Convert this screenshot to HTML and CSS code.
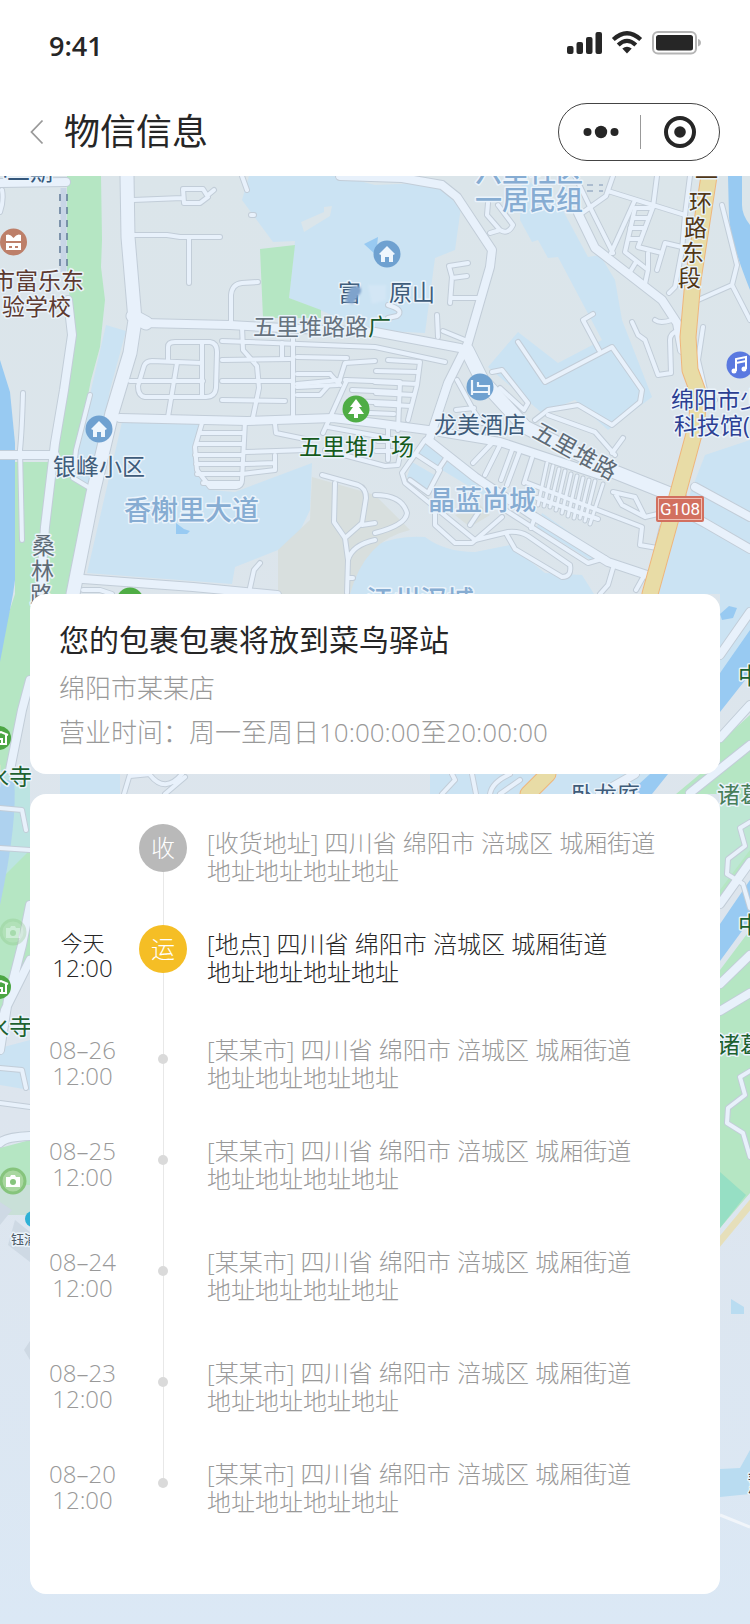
FILE: index.html
```html
<!DOCTYPE html>
<html lang="zh-CN">
<head>
	<meta charset="utf-8">
	<meta name="viewport" content="width=device-width">
	<title>物信信息</title>
	<link rel="stylesheet" href="styles.css">
</head>
<body>
	<header class="top">
		<div class="status">
			<span class="clock">9:41</span>
			<div class="signals">
				<svg width="35" height="24" viewBox="0 0 35 24">
					<g fill="#262626">
						<rect x="0" y="15" width="6.500" height="8" rx="2"/>
						<rect x="9.500" y="11" width="6.500" height="12" rx="2"/>
						<rect x="19" y="6" width="6.500" height="17" rx="2"/>
						<rect x="28.500" y="1" width="6.500" height="22" rx="2"/>
					</g>
				</svg>
				<svg width="32" height="24" viewBox="0 0 32 24">
					<g fill="none" stroke="#262626" stroke-width="4.200">
						<path d="M2.300 8.500Q16 -4 29.700 8.500"/>
						<path d="M7.200 14Q16 5.800 24.800 14"/>
					</g>
					<path d="M11.300 17.500Q16 13.800 20.700 17.500L16 22.500Z" fill="#262626"/>
				</svg>
				<svg width="50" height="24" viewBox="0 0 50 24">
					<rect x="1" y="1" width="43" height="21.500" rx="5" fill="none" stroke="#b5b5b5" stroke-width="2"/>
					<rect x="4" y="4" width="37" height="15.500" rx="2.500" fill="#262626"/>
					<path d="M46 8Q49 9 49 11.800Q49 14.500 46 15.500Z" fill="#b5b5b5"/>
				</svg>
			</div>
		</div>
		<div class="nav">
			<button class="back" type="button" aria-label="返回">
				<svg width="14" height="26" viewBox="0 0 14 26"><path d="M12.500 1.500L1.500 13L12.500 24.500" fill="none" stroke="#999" stroke-width="1.800"/></svg>
			</button>
			<h1 class="title">物信信息</h1>
			<div class="capsule">
				<button type="button" aria-label="更多">
					<svg width="36" height="14" viewBox="0 0 36 14"><g fill="#262626"><circle cx="4.500" cy="7" r="4"/><circle cx="18" cy="7" r="6.200"/><circle cx="31.500" cy="7" r="4"/></g></svg>
				</button>
				<button type="button" aria-label="关闭">
					<svg width="32" height="32" viewBox="0 0 32 32"><circle cx="16" cy="16" r="14" fill="none" stroke="#262626" stroke-width="4"/><circle cx="16" cy="16" r="5.800" fill="#262626"/></svg>
				</button>
			</div>
		</div>
	</header>

	<main class="stage">
		<svg class="map" viewBox="0 176 750 1448" preserveAspectRatio="xMidYMin slice" aria-hidden="true">
			<defs>
				<linearGradient id="ground" x1="0" y1="0" x2="0" y2="1">
					<stop offset="0" stop-color="#dbe5ea"/>
					<stop offset="0.650" stop-color="#dde5ee"/>
					<stop offset="1" stop-color="#dbe8f5"/>
				</linearGradient>
				<filter id="soft"><feGaussianBlur stdDeviation="1.200"/></filter>
				<!-- small streets -->
				<g id="minor">
					<path d="M23 393Q22 430 20 450L22 540"/>
					<path d="M133 200L182 198M183 189L203 189L208 197L200 203L184 203ZM208 195L214 190"/>
					<path d="M133 235L167 235L180 237L220 237M189 237V283M231 323V295Q232 284 242 283L258 282"/>
					<path d="M242 176L247 190M251 215L254 215M0 212Q4 200 2 190"/>
					<path d="M222 341L375 347L445 362M222 360L290 359M222 381L293 381M242 327L243 350L257 366L259 388L253 417"/>
					<path d="M293 337V420M282 343V357M297 357L347 358M297 374L330 374M297 387L338 385L345 363L375 361"/>
					<path d="M168 360V347Q168 342 175 342L210 342Q217 343 217 352L216 388Q215 397 206 397L145 397Q138 396 138 386L144 366Q146 361 152 361L202 363M202 343V396M130 381L203 381M177 363L168 417"/>
					<path d="M222 400L285 401M297 395L320 395L328 386M297 384L340 380M347 380L323 433M330 374L340 385M345 380L400 382L398 430M352 390L397 392M350 401L396 403M347 412L394 414"/>
					<path d="M202 423L195 447L197 470L210 487L236 487Q242 486 242 480L245 421M201 433H243M197 444H243M195 455H243M196 464H243M197 474H242M203 483H241"/>
					<path d="M245 452L306 450M245 464L275 463M275 455V470L242 474M275 424L276 433L310 440M328 427L400 440M325 450L385 466L398 465L403 440M388 425V460M378 441H398M376 451H397"/>
					<path d="M260 563L254 570L250 588M90 395L76 450L73 478L88 487M83 590H100L112 594"/>
					<path d="M322 475L358 485Q366 488 366 498L362 523L345 538L334 522L335 483M375 523L362 525M345 538L348 560L347 593M375 540Q352 545 348 560M348 578H353"/>
					<path d="M375 495Q402 495 407 513Q406 525 375 533"/>
					<path d="M388 360L420 362L417 385L408 420M376 371L418 372M375 382L417 384M376 393L414 395M376 404L411 406"/>
					<path d="M468 263L449 266L452 277L450 303M467 276L452 278M452 298L478 298M437 315L438 337M443 331L465 340M388 305Q405 310 397 316L388 318"/>
					<path d="M488 203L487 215L500 230Q508 235 513 225L498 205M490 233L500 230"/>
					<path d="M575 176L588 203L613 253M582 213L606 196L613 176M608 191L685 215M635 200L611 253M657 176L653 207L638 247L662 253L665 243L682 247"/>
					<path d="M635 208L625 252L648 270L645 284M635 208H650M633 218H648M630 228H645M628 239H641M648 253V270M662 253L657 270M682 250L675 287L669 293M636 262L630 272M690 176L685 215L682 250"/>
					<path d="M632 322L638 335L645 340L658 375L671 373L670 340Q670 333 678 331M655 320Q660 324 672 320"/>
					<path d="M722 205L737 265L732 285L698 300M732 285L750 320M703 327L698 360L705 390L715 400"/>
					<path d="M518 342L545 382L612 347L642 390L640 402L612 425L578 405L548 410L535 420M492 372L502 370L528 403L524 410L500 388M593 314L583 320L599 350"/>
					<path d="M457 380L475 413L482 423M456 410L474 408M548 415L595 432L615 455M623 438L612 453"/>
					<path d="M492 443L473 463M500 445L485 475M512 450L501 480M519 453L507 485M532 458L524 483M425 440L402 473L405 483L475 540L508 532Q520 531 528 536L570 565Q572 577 562 577L515 549L507 535"/>
					<path d="M435 513V525L455 543L472 543L502 517M417 455L440 470L428 493L410 480M448 455L438 470M502 508L588 563L605 558M470 525L478 513"/>
					<path d="M525 482L642 527L640 545L657 548L662 527M537 498L598 519M613 492L635 497L645 517L662 513M645 517L622 505L616 495M535 517L531 528M613 568L608 585L600 594M645 574L636 590"/>
					<path d="M130 774L124 794M130 776L150 774M150 775Q165 794 182 774M165 794L185 777M452 774L455 780L442 794M472 774L476 794M490 794Q492 782 510 774M500 794L520 780"/>
					<path d="M0 808L22 810L26 830M0 848L30 850M0 1068L22 1070L26 1088M0 1103L30 1107"/>
					<path d="M750 822L740 828L745 846L728 859L727 874L743 884L750 908M750 1071L740 1077L745 1095L728 1108L727 1123L743 1133L750 1157"/>
				</g>
				<!-- parking lanes -->
				<path id="lanes" d="M547 463L538 505M553 466L544 506M559 469L550 507M565 471L556 510M571 474L562 513M577 476L568 516M583 478L574 518M589 480L580 518M595 481L585 521M603 484L590 524"/>
				<!-- wider streets -->
				<g id="middle">
					<path d="M0 183L66 182M68 300L72 335L64 390L55 443L45 527L40 594"/>
					<path d="M0 455L55 455M143 323L230 325L300 329L375 332L460 348"/>
					<path d="M120 418L247 421L333 418L375 423L428 430L500 442L600 475"/>
					<path d="M83 579L193 587L277 595"/>
					<path d="M340 176L402 178L442 185L457 197L492 250L490 267L468 343L448 383L430 437"/>
					<path d="M428 440L475 477L535 517L608 562L650 576"/>
					<path d="M578 213L595 248L662 300L677 323L682 350M695 487L750 517M680 510L705 523L750 549"/>
					<path d="M30 680L22 710L10 770M30 905L22 945L8 1000L0 1050M30 960L5 1010L0 1030M0 1143Q5 1137 30 1136"/>
					<path d="M720 655L750 612M720 738L750 705M690 793L750 745M720 904L750 862M720 984L750 955M720 1011L750 993M635 774L600 794"/>
				</g>
				<g id="major">
					<path d="M127 176L128 237L135 320L130 353L112 413L93 493L73 594M133 316L146 323"/>
					<path d="M467 350L482 380L525 427L615 472L680 498"/>
				</g>
				<path id="highway" d="M709 176L693 280L688 337L690 370L698 392L697 423L678 493L650 594M548 774L528 794"/>
				<g id="house"><circle r="13.500"/><path d="M-8 0L0 -8L8 0L6 1V8H2V3H-2V8H-6V1Z" fill="#eef6fd"/></g>
				<g id="camera"><circle r="12" fill="#a9d7a0" stroke="#86c47c" stroke-width="3"/><path d="M-7 -4H-3L-2 -6H2L3 -4H7V6H-7Z" fill="#fff"/><circle cy="1" r="3" fill="#86c47c"/></g>
				<g id="temple"><circle r="12" fill="#4ca644"/><path d="M-6 -3L2 -6L9 -3M-4 -3V6H7V-3M0 6V1H3V6" fill="none" stroke="#fff" stroke-width="2"/></g>
			</defs>

			<rect y="176" width="750" height="1448" fill="url(#ground)"/>

			<!-- water and districts -->
			<g fill="#cbe3f3">
				<path d="M249 176L242 200L273 242L295 241L289 298L320 310L365 330L425 333L435 258L455 250L461 207L450 190L422 183L375 185L340 176Z"/>
				<path d="M106 325L126 331L110 390L92 485L72 480L80 440L91 390Z"/>
				<path d="M122 422L200 423L193 447L197 475L210 490L235 492L312 463L310 510L297 537L278 550L235 567L232 584L87 573Z"/>
				<path d="M522 176L560 205L588 257L600 255L615 280L622 320L652 397L608 430L575 400L542 413L488 367L518 332L558 363L602 340L558 257L548 258L538 240L532 242L520 220Z"/>
				<path d="M340 594Q350 560 375 545Q400 535 425 537Q445 552 475 552L510 545L545 573L582 575L594 594Z"/>
				<path d="M705 455L750 440V594H655L676 530Z"/>
				<path d="M425 443L445 457L438 467L418 455ZM412 462L438 477L428 493L407 477ZM450 458L485 480L520 505L500 505L442 470ZM542 513L605 557L595 563L537 527Z"/>
				<path d="M720 594H750V655L720 672ZM60 774H120V794H60ZM430 774H650V794H430ZM0 1048L30 1040V1090L0 1085Z"/>
			</g>
			<path d="M301 222L324 212V207L332 206L330 216L304 232Z" fill="#dbe5ea"/>
			<path d="M312 477L375 495L410 530Q365 540 350 594H278V550L310 520Z" fill="#d8dfde"/>
			<path d="M455 515L480 505L490 515L470 527Z" fill="#d8dfde"/>
			<g fill="#b5e6c3">
				<path d="M67 176H101L102 240L101 267L105 300L100 347L91 380L77 450L72 475L88 490L68 600L30 620V690L5 770H0V640L15 594V462H50L70 380L75 345L72 310L67 280Z"/>
				<path d="M260 249L295 245L289 298L321 310V318H263Z"/>
				<path d="M720 742L750 715V865L720 900V794H676L700 774H720ZM720 970L750 930V1193L720 1228Z"/>
				<path d="M0 870L30 850V960L0 1020ZM0 1148L30 1140V1185L0 1192Z"/>
			</g>
			<path d="M720 1172L746 1195L720 1228Z" fill="#96dfc4"/>
			<path d="M0 770H30V850L0 880Z" fill="#bce4e2"/>
			<path d="M720 800H750V850L720 890Z" fill="#bde7d3"/>
			<path d="M0 1185H30V1215H0Z" fill="#c9e0d8"/>
			<g fill="#98caf2">
				<path d="M0 360L10 392L15 443V580L13 594L0 662Z"/>
				<path d="M728 176H742V205Q742 215 750 225V290Q730 240 729 217Z"/>
				<path d="M720 673L750 630V674L720 712ZM720 924L750 880V920L720 961ZM628 794L650 774H668L652 794Z"/>
				<path d="M364 244L378 237L376 255ZM176 523L184 529L190 531L187 534H176ZM720 614L729 606L737 608L733 618L722 620Z"/>
			</g>
			<path d="M0 780H14Q18 820 0 905Z" fill="#aed2ef"/>
			<path d="M731 1299L744 1307V1314H731ZM720 1469L740 1468L750 1450V1494L720 1497Z" fill="#b9dcf1"/>
			<path d="M0 1202L12 1210L0 1225ZM15 1220L30 1232V1262L8 1245ZM24 1350L30 1341V1360Z" fill="#ced9e4"/>
			<path d="M720 1515L750 1527" stroke="#f1f5fa" stroke-width="3"/>
			<path d="M63.500 188V272" stroke="#c8d5e6" stroke-width="6"/>
			<path d="M60 194V272M67 194V272" stroke="#5f7896" stroke-width="1.500" stroke-dasharray="7 6"/>
			<path d="M587 185H603M587 191H603" stroke="#7c94b4" stroke-dasharray="6 6"/>

			<!-- roads: casing first, surface on top -->
			<use href="#minor" class="road casing minor"/>
			<use href="#middle" class="road casing middle"/>
			<use href="#major" class="road casing major"/>
			<use href="#lanes" class="road casing lanes"/>
			<use href="#minor" class="road surface minor"/>
			<use href="#middle" class="road surface middle"/>
			<use href="#major" class="road surface major"/>
			<use href="#lanes" class="road surface lanes"/>
			<use href="#highway" class="road highway-casing"/>
			<use href="#highway" class="road highway"/>
			<path d="M712 1251L760 1193" class="road" stroke="#e6dfba" stroke-width="7"/>

			<!-- places -->
			<g class="labels">
				<text x="-16" y="180" fill="#34577b">小二期</text>
				<g fill="#5d3a30">
					<text x="-8" y="289">市富乐东</text>
					<text x="2" y="315">验学校</text>
				</g>
				<text x="253" y="335" fill="#66727e">五里堆路路<tspan fill="#1a5a2e">广</tspan></text>
				<g fill="#3f5c7a">
					<text x="338" y="301">富</text>
					<text x="389" y="301">原山</text>
					<text x="53" y="475">银峰小区</text>
					<text x="434" y="433">龙美酒店</text>
					<text x="571" y="803">卧龙庭</text>
				</g>
				<text x="299" y="455" fill="#155a1c">五里堆广场</text>
				<text transform="translate(531 436) rotate(29)" fill="#5f6b76">五里堆路</text>
				<g fill="#2c3f93">
					<text x="671" y="408">绵阳市少</text>
					<text x="674" y="434">科技馆(</text>
				</g>
				<g fill="#513716">
					<text x="695" y="186">一</text>
					<text x="689" y="211">环</text>
					<text x="684" y="236">路</text>
					<text x="681" y="261">东</text>
					<text x="678" y="286">段</text>
				</g>
				<g fill="#5f6b76">
					<text x="32" y="554">桑</text>
					<text x="31" y="579">林</text>
					<text x="30" y="603">路</text>
				</g>
				<g fill="#1c6130">
					<text x="-14" y="785">水寺</text>
					<text x="-14" y="1035">水寺</text>
					<text x="738" y="684">中</text>
					<text x="738" y="933">中</text>
					<text x="717" y="803" fill="#477e5a">诸葛</text>
					<text x="717" y="1053">诸葛</text>
				</g>
				<text x="747" y="1492" fill="#34404c">慧</text>
				<text class="tiny" x="11" y="1244" fill="#4d5a66">钰浦</text>
			</g>
			<g class="areas">
				<text x="475" y="182">六里社区</text>
				<text x="475" y="210">一居民组</text>
				<text x="124" y="520">香榭里大道</text>
				<text x="428" y="510">晶蓝尚城</text>
				<text x="366" y="610">江州汉城</text>
			</g>
			<path d="M350 288Q362 282 361 292L353 304L345 302Z" fill="#7fa3cc" filter="url(#soft)"/>
			<path d="M368 285H386V300L372 304Z" fill="#d3e6f5" filter="url(#soft)"/>

			<rect x="656" y="496" width="48" height="26" rx="2" fill="#d2705f"/>
			<rect x="658.500" y="498.500" width="43" height="21" fill="none" stroke="#f0c0b5"/>
			<text class="route" x="680" y="515">G108</text>

			<use href="#house" x="99" y="429" fill="#6fa1d0"/>
			<use href="#house" x="387" y="254" fill="#6fa1d0"/>
			<circle cx="480" cy="387" r="13.500" fill="#6fa1d0"/>
			<path d="M472 380V395M472 392H489V386H478V382M489 386V395" fill="none" stroke="#eef6fd" stroke-width="2.200"/>
			<circle cx="356" cy="409" r="13.500" fill="#4fad45"/>
			<path d="M356 399L362 407H359L364 414H358V418H354V414H348L353 407H350Z" fill="#fff"/>
			<circle cx="740" cy="365" r="13.500" fill="#5a79e0"/>
			<path d="M736 371V359L746 357V369M736 363L746 361" fill="none" stroke="#fff" stroke-width="2"/>
			<circle cx="734" cy="371" r="2.500" fill="#fff"/><circle cx="744" cy="369" r="2.500" fill="#fff"/>
			<circle cx="13.500" cy="242" r="13.500" fill="#bd7f69"/>
			<path d="M6 235Q10 233 13.500 238Q17 233 21 235V241H6ZM6 243H21V250H6Z" fill="#fff"/>
			<path d="M9 247H12M15 247H18" stroke="#bd7f69" stroke-width="2"/>
			<circle cx="130" cy="601" r="13.500" fill="#4fad45"/>
			<use href="#temple" x="-1" y="738"/>
			<use href="#temple" x="-1" y="987"/>
			<use href="#camera" x="13" y="932" opacity="0.300"/>
			<use href="#camera" x="13" y="1181"/>
			<circle cx="33" cy="1219" r="8" fill="#2fb1d6"/>
		</svg>

		<section class="card station">
			<h2 class="station-title">您的包裹包裹将放到菜鸟驿站</h2>
			<p class="station-line">绵阳市某某店</p>
			<p class="station-line">营业时间：周一至周日10:00:00至20:00:00</p>
		</section>

		<section class="card">
			<ol class="timeline">
				<li class="step">
					<div class="time"></div>
					<div class="node"><span class="badge">收</span></div>
					<p class="desc">[收货地址] 四川省 绵阳市 涪城区 城厢街道<br>地址地址地址地址</p>
				</li>
				<li class="step current">
					<div class="time"><span class="day">今天</span><br>12:00</div>
					<div class="node"><span class="badge">运</span></div>
					<p class="desc">[地点] 四川省 绵阳市 涪城区 城厢街道<br>地址地址地址地址</p>
				</li>
				<li class="step">
					<div class="time">08–26<br>12:00</div>
					<div class="node"><span class="dot"></span></div>
					<p class="desc">[某某市] 四川省 绵阳市 涪城区 城厢街道<br>地址地址地址地址</p>
				</li>
				<li class="step far">
					<div class="time">08–25<br>12:00</div>
					<div class="node"><span class="dot"></span></div>
					<p class="desc">[某某市] 四川省 绵阳市 涪城区 城厢街道<br>地址地址地址地址</p>
				</li>
				<li class="step far">
					<div class="time">08–24<br>12:00</div>
					<div class="node"><span class="dot"></span></div>
					<p class="desc">[某某市] 四川省 绵阳市 涪城区 城厢街道<br>地址地址地址地址</p>
				</li>
				<li class="step">
					<div class="time">08–23<br>12:00</div>
					<div class="node"><span class="dot"></span></div>
					<p class="desc">[某某市] 四川省 绵阳市 涪城区 城厢街道<br>地址地址地址地址</p>
				</li>
				<li class="step">
					<div class="time">08–20<br>12:00</div>
					<div class="node"><span class="dot"></span></div>
					<p class="desc">[某某市] 四川省 绵阳市 涪城区 城厢街道<br>地址地址地址地址</p>
				</li>
			</ol>
		</section>
	</main>
</body>
</html>
```
FILE: styles.css
```css
*{
	box-sizing: border-box;
	margin: 0;
	padding: 0;
}
body{
	background: #dbe8f5;
	color: #262626;
	font-family: "Open Sans", "Noto Sans CJK SC", sans-serif;
	font-weight: 300;
}
button{
	border: 0;
	background: none;
	cursor: pointer;
}
svg{
	display: block;
}

/* 顶部 */
.top{
	background: #fff;
}
.status{
	display: flex;
	justify-content: space-between;
	height: 88px;
	padding: 28px 48px 0 49px;
}
.clock{
	font-size: 27px;
	font-weight: 600;
	line-height: 36px;
}
.signals{
	display: flex;
	gap: 9px;
	padding-top: 3px;
}
.nav{
	display: flex;
	align-items: center;
	height: 88px;
	padding: 0 30px;
}
.back{
	margin-right: 20px;
}
.title{
	font-size: 36px;
	font-weight: 400;
	line-height: 52px;
}
.capsule{
	display: flex;
	width: 162px;
	height: 58px;
	margin-left: auto;
	border: 1px solid #444;
	border-radius: 29px;
}
.capsule button{
	display: flex;
	flex: 1;
	align-items: center;
	justify-content: center;
	position: relative;
}
.capsule button:first-child{
	padding-left: 2px;
}
.capsule button + button::before{
	content: "";
	position: absolute;
	left: 0;
	top: 11px;
	bottom: 11px;
	width: 1px;
	background: #999;
}

/* 地图 */
.stage{
	position: relative;
	display: flex;
	flex-direction: column;
	gap: 20px;
	padding: 418px 30px 30px;
}
.map{
	position: absolute;
	left: 0;
	top: 0;
	width: 100%;
	height: 100%;
}
.road{
	fill: none;
	stroke-linecap: round;
	stroke-linejoin: round;
}
.casing{
	stroke: #c2cdd8;
}
.surface{
	stroke: #e8f1fb;
}
.casing.lanes{
	stroke-width: 5px;
}
.surface.lanes{
	stroke-width: 3px;
}
.casing.minor{
	stroke-width: 6px;
}
.surface.minor{
	stroke-width: 4px;
}
.casing.middle{
	stroke-width: 10px;
}
.surface.middle{
	stroke-width: 8px;
}
.casing.major{
	stroke-width: 15px;
}
.surface.major{
	stroke-width: 13px;
}
.highway-casing{
	stroke: #efb67c;
	stroke-width: 17px;
}
.highway{
	stroke: #e8dca6;
	stroke-width: 15px;
}
.labels,
.areas{
	paint-order: stroke;
	stroke: #eaf3fb;
	stroke-width: 3px;
	stroke-linejoin: round;
}
.labels{
	font-size: 23px;
	font-weight: 400;
}
.areas{
	fill: #86acd2;
	font-size: 27px;
	font-weight: 500;
}
.labels .tiny{
	font-size: 13px;
}
.route{
	fill: #fff;
	font: 400 17px Roboto, sans-serif;
	text-anchor: middle;
}

/* 卡片 */
.card{
	position: relative;
	background: #fff;
	border-radius: 16px;
}
.station{
	padding: 20px 29px;
}
.station-title{
	font-size: 30px;
	font-weight: 400;
	line-height: 52px;
}
.station-line{
	color: #999;
	font-size: 26px;
	line-height: 44px;
}

/* 物流进度 */
.timeline{
	list-style: none;
	padding: 30px 16px 38px;
}
.step{
	display: grid;
	grid-template-columns: 73px 48px 1fr;
	column-gap: 20px;
	color: #999;
	font-size: 24px;
}
.time{
	padding-top: 6px;
	line-height: 26px;
	text-align: center;
}
.day{
	font-size: 22px;
}
.node{
	position: relative;
	display: flex;
	justify-content: center;
}
.node::before{
	content: "";
	position: absolute;
	left: 24px;
	top: 0;
	bottom: 0;
	width: 1px;
	background: #e8e8e8;
}
/* 最后一个圆点下面不再画线 */
.step:last-child .node::before{
	bottom: auto;
	height: 28px;
}
.badge,
.dot{
	position: relative;
	border-radius: 50%;
}
.badge{
	width: 48px;
	height: 48px;
	background: #b9b9b9;
	color: #fff;
	line-height: 48px;
	text-align: center;
}
.dot{
	width: 10px;
	height: 10px;
	margin-top: 23px;
	background: #dadada;
}
.desc{
	padding: 5px 0 40px;
	line-height: 28px;
}
.current{
	color: #262626;
}
.current .badge{
	background: #f5be25;
}
.current .time{
	padding-top: 4px;
}
.current .desc{
	padding-bottom: 45px;
}
.far .desc{
	padding-bottom: 50px;
}
```
